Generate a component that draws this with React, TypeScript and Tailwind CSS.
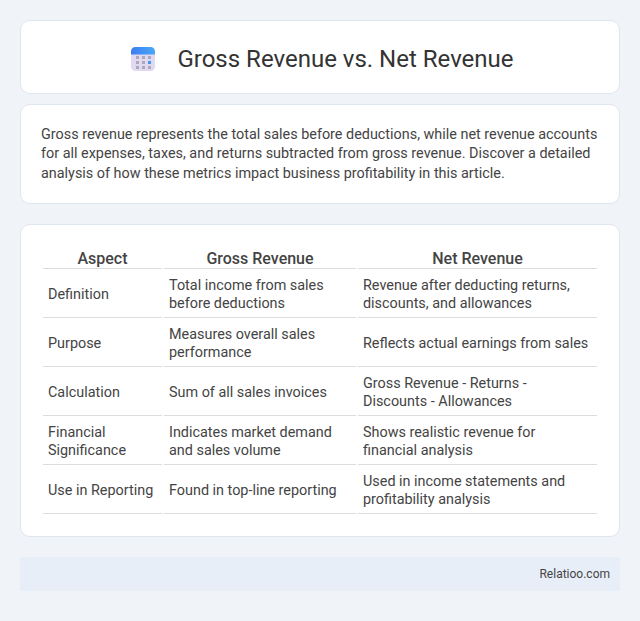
const rows = [
  ["Definition", "Total income from sales before deductions", "Revenue after deducting returns, discounts, and allowances"],
  ["Purpose", "Measures overall sales performance", "Reflects actual earnings from sales"],
  ["Calculation", "Sum of all sales invoices", "Gross Revenue - Returns - Discounts - Allowances"],
  ["Financial Significance", "Indicates market demand and sales volume", "Shows realistic revenue for financial analysis"],
  ["Use in Reporting", "Found in top-line reporting", "Used in income statements and profitability analysis"],
];

const CalendarIcon = () => (
  <svg width="24" height="24" viewBox="0 0 24 24" className="mr-[22px] shrink-0">
    <defs>
      <linearGradient id="top" x1="0" y1="0" x2="1" y2="0">
        <stop offset="0" stopColor="#3d7cf0" />
        <stop offset="1" stopColor="#4aa8f8" />
      </linearGradient>
    </defs>
    <rect x="0" y="0" width="24" height="24" rx="4.5" fill="#e0d9f0" />
    <path d="M0 7.5V4.5A4.5 4.5 0 0 1 4.500 0h15A4.500 4.500 0 0 1 24 4.500v3z" fill="url(#top)" />
    {[5, 11, 17].map((x) =>
      [9, 14, 19].map((y) => (
        <rect
          key={`${x}-${y}`}
          x={x}
          y={y}
          width="3"
          height="3"
          fill={x === 17 && y === 14 ? "#3a9af0" : "#aea8bf"}
        />
      ))
    )}
  </svg>
);

const App = () => {
  return (
    <div className="min-h-[621px] bg-[#f0f4f9] p-5 font-['Roboto',sans-serif] text-[#444]">
      <div className="flex h-[74px] items-center justify-center rounded-[10px] border border-[#e0e6ee] bg-white pt-[3px] pl-[5px]">
        <CalendarIcon />
        <h1 className="text-2xl font-normal text-[#333]">Gross Revenue vs. Net Revenue</h1>
      </div>

      <div className="mt-[10px] rounded-[10px] border border-[#e0e6ee] bg-white p-5">
        <p className="text-[14.4px] leading-[19.44px]">
          Gross revenue represents the total sales before deductions, while net revenue accounts for all expenses, taxes, and returns subtracted from gross revenue. Discover a detailed analysis of how these metrics impact business profitability in this article.
        </p>
      </div>

      <div className="mt-5 rounded-[10px] border border-[#e0e6ee] bg-white px-5 pt-[19px] pb-5">
        <table className="w-full border-separate border-spacing-0.5 text-[14.4px] leading-[18px]">
          <thead>
            <tr>
              <th className="w-[119px] border-b border-[#ddd] pt-1 text-[16px] leading-[18px] font-medium">Aspect</th>
              <th className="w-[192px] border-b border-[#ddd] pt-1 text-[16px] leading-[18px] font-medium">Gross Revenue</th>
              <th className="border-b border-[#ddd] pt-1 text-[16px] leading-[18px] font-medium">Net Revenue</th>
            </tr>
          </thead>
          <tbody>
            {rows.map((row) => (
              <tr key={row[0]}>
                {row.map((cell) => (
                  <td key={cell} className="border-b border-[#ddd] px-[5px] pt-[6px] pb-1 align-middle">
                    {cell}
                  </td>
                ))}
              </tr>
            ))}
          </tbody>
        </table>
      </div>

      <div className="mt-5 bg-[#e8eef8] px-[10px] py-[8px] text-right text-[12px] leading-[18px]">
        Relatioo.com
      </div>
    </div>
  );
};

export default App;
